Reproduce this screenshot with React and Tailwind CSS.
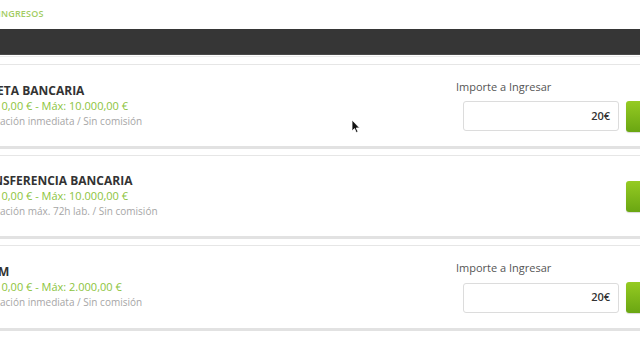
const methods = [
  {
    name: "TARJETA BANCARIA",
    limits: "Mín: 10,00 € - Máx: 10.000,00 €",
    note: "Acreditación inmediata / Sin comisión",
    amount: true,
    h: "h-[85px]",
  },
  {
    name: "TRANSFERENCIA BANCARIA",
    limits: "Mín: 10,00 € - Máx: 10.000,00 €",
    note: "Acreditación máx. 72h lab. / Sin comisión",
    amount: false,
    h: "h-[84px]",
  },
  {
    name: "BIZUM",
    limits: "Mín: 10,00 € - Máx: 2.000,00 €",
    note: "Acreditación inmediata / Sin comisión",
    amount: true,
    h: "h-[86px]",
  },
];

function Cursor() {
  return (
    <svg
      className="absolute left-[351px] top-[119px]"
      width="10"
      height="15"
      viewBox="0 0 10 15"
    >
      <path d="M1 1 L1 12 L3.5 9.6 L5.3 13.6 L7 12.8 L5.2 9 L8.6 9 Z" fill="#111" stroke="#fff" strokeWidth="0.8" />
    </svg>
  );
}

function MethodCard({ m }) {
  return (
    <div
      className={`${m.h} flex items-center justify-between border border-[#e6e6e6] border-b-[3px] border-b-[#e2e2e2] bg-white pl-[20px] pr-[19px]`}
    >
      <div className="flex flex-col">
        <p className="text-[12px] leading-[15px] font-bold text-[#333]">{m.name}</p>
        <p className="text-[11px] leading-[15px] text-[#8cc43c]">{m.limits}</p>
        <p className="-ml-[3px] text-[10px] leading-[15px] text-[#a6a6a6] mt-[1px]">{m.note}</p>
      </div>
      <div className="flex flex-col items-start">
        {m.amount && (
          <label className="text-[11px] leading-[14px] text-[#555] mb-[7px]">Importe a Ingresar</label>
        )}
        <div className="flex items-center">
          {m.amount && (
            <div className="ml-[7px] mr-[7px] flex h-[30px] w-[156px] items-center justify-end rounded-[3px] border border-[#dcdcdc] bg-white pr-[8px] text-[11px] font-semibold text-[#333]">
              20€
            </div>
          )}
          <button className="h-[31px] w-[80px] rounded-[3px] bg-linear-to-b from-[#95cb22] to-[#6aa612] shadow-[0_1px_1px_rgba(0,0,0,0.15)]" />
        </div>
      </div>
    </div>
  );
}

export default function App() {
  return (
    <div
      className="relative h-[360px] w-[640px] overflow-hidden bg-white"
      style={{ fontFamily: '"Open Sans", "DejaVu Sans", sans-serif' }}
    >
      <div className="h-[29px] flex items-center -ml-[2px] pb-[1px]">
        <span className="text-[9px] font-semibold tracking-[0.2px] text-[#a2cc62]">INGRESOS</span>
      </div>
      <div className="h-[26px] bg-[#363636] border-b border-[#4a4a4a]" />
      <div className="h-[1px] bg-[#ececec] mt-[1px]" />
      <div className="-ml-[51px] w-[777px] flex flex-col gap-[6px] pt-[7px]">
        {methods.map((m) => (
          <MethodCard key={m.name} m={m} />
        ))}
      </div>
      <Cursor />
    </div>
  );
}
